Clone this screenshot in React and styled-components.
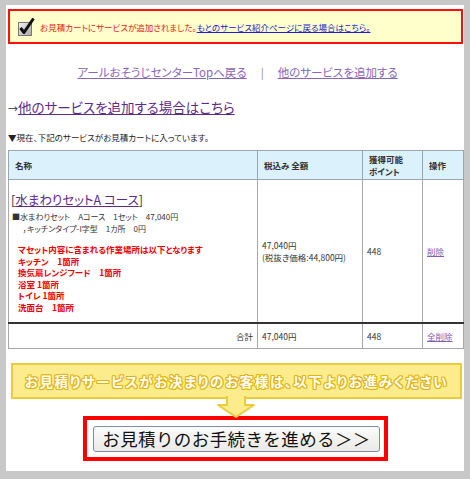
import React from "react";
import styled, { createGlobalStyle } from "styled-components";

const Global = createGlobalStyle`
  html, body { margin: 0; padding: 0; background: #c8c8c8; }
  body { font-family: "Noto Sans CJK JP", "Liberation Sans", sans-serif; }
`;

const Frame = styled.div`
  width: 470px;
  height: 479px;
  box-sizing: border-box;
  padding: 5px 6px 8px 6px;
  background: #c8c8c8;
`;

const Page = styled.div`
  background: #fff;
  height: 100%;
  box-sizing: border-box;
  padding: 4px 1px 0 2px;
  display: flex;
  flex-direction: column;
  font-family: "Noto Sans CJK JP", sans-serif;
  font-feature-settings: "palt";
`;

const Notice = styled.div`
  height: 35px;
  box-sizing: border-box;
  border: 2px solid #ff1010;
  background: #ffffcc;
  display: flex;
  align-items: center;
  padding-left: 7px;
  gap: 5px;
  font-size: 8.5px;
`;

const NoticeText = styled.span`
  color: #f01818;
`;

const NoticeLink = styled.a`
  color: #2020d0;
  text-decoration: underline;
`;

const NavRow = styled.div`
  margin-top: 20px;
  display: flex;
  justify-content: center;
  align-items: center;
  gap: 14px;
  font-size: 11.5px;
  padding-left: 4px;
`;

const NavLink = styled.a`
  color: #8a66b8;
  text-decoration: underline;
`;

const Sep = styled.span`
  color: #888;
  font-size: 11px;
`;

const BigLine = styled.div`
  margin-top: 17px;
  display: flex;
  align-items: baseline;
  font-size: 13.5px;
  color: #5b2b8c;
`;

const Arrow = styled.span`
  font-size: 10px;
  color: #333;
`;

const BigLink = styled.a`
  color: #5b2b8c;
  text-decoration: underline;
  text-decoration-thickness: 1px;
`;

const Caption = styled.div`
  margin-top: 13px;
  font-size: 8.5px;
  color: #222;
  height: 14px;
  line-height: 14px;
`;

const Table = styled.table`
  margin-top: 6px;
  width: 455px;
  border-collapse: collapse;
  table-layout: fixed;
  font-size: 8.5px;
  color: #222;
`;

const Th = styled.th`
  background: #dbf1fb;
  border: 1px solid #9aa6ae;
  height: 28px;
  text-align: left;
  vertical-align: middle;
  font-weight: bold;
  padding: 0 6px;
  line-height: 12px;
  color: #333;
`;

const Td = styled.td`
  border: 1px solid #a8a8a8;
  border-bottom: ${(p) => (p.$thick ? "2px solid #333" : "1px solid #a8a8a8")};
  vertical-align: middle;
  padding: ${(p) => (p.$pad ? p.$pad : "0 4px")};
  text-align: ${(p) => (p.$right ? "right" : "left")};
  height: ${(p) => (p.$h ? p.$h : "auto")};
  line-height: 12px;
  color: #333;
`;

const ItemTitle = styled.div`
  font-size: 12.5px;
  line-height: 16px;
  color: #333;
`;

const ItemLink = styled.a`
  color: #5b2b8c;
  text-decoration: underline;
`;

const SubLine = styled.div`
  font-size: 8px;
  line-height: 12px;
  padding-left: ${(p) => (p.$indent ? "12px" : "1px")};
  margin-top: ${(p) => (p.$first ? "3px" : "0")};
  color: #333;
`;

const RedList = styled.div`
  margin-top: 9px;
  padding-left: 7px;
  color: #f00000;
  font-weight: bold;
  font-size: 8.5px;
  line-height: 11.6px;
`;

const SmallLink = styled.a`
  color: #8060b0;
  text-decoration: underline;
`;

const Banner = styled.div`
  margin: 14px 1px 0 3px;
  height: 36px;
  box-sizing: border-box;
  border: 2px solid #eccb3a;
  background: #fdec8c;
  display: flex;
  align-items: center;
  justify-content: center;
  font-weight: bold;
  font-size: 13.5px;
  letter-spacing: 1.6px;
  color: #fff;
  text-shadow:
    1px 0 0 #e3b410, -1px 0 0 #e3b410, 0 1px 0 #e3b410, 0 -1px 0 #e3b410,
    1px 1px 0 #e3b410, -1px -1px 0 #e3b410, 1px -1px 0 #e3b410, -1px 1px 0 #e3b410;
`;

const ArrowWrap = styled.div`
  display: flex;
  justify-content: center;
  margin-top: -3px;
  height: 22px;
  position: relative;
  z-index: 1;
`;

const RedBox = styled.div`
  align-self: center;
  margin-top: -2px;
  width: 305px;
  height: 45px;
  box-sizing: border-box;
  border: 4px solid #ff0000;
  padding: 6px 4px 5px 6px;
  background: #fff;
`;

const Button = styled.button`
  width: 100%;
  height: 26px;
  box-sizing: border-box;
  border: 1px solid #7d8fa6;
  border-radius: 3px;
  background: linear-gradient(#fbfbfb, #e9e9e6);
  font-family: "Noto Sans CJK JP", sans-serif;
  font-feature-settings: normal;
  font-size: 17.5px;
  letter-spacing: 0.4px;
  color: #111;
  padding: 0;
  line-height: 22px;
  cursor: pointer;
`;

function CheckIcon() {
  return (
    <svg width="18" height="20" viewBox="0 0 18 20">
      <defs>
        <linearGradient id="cb" x1="0" y1="0" x2="1" y2="1">
          <stop offset="0" stopColor="#f4f4f4" />
          <stop offset="1" stopColor="#a8a8a8" />
        </linearGradient>
      </defs>
      <rect x="1.5" y="5.5" width="13" height="13" fill="url(#cb)" stroke="#777" />
      <path d="M3.5 11 L7 15.5 L16.5 1.5" fill="none" stroke="#111" strokeWidth="3" strokeLinejoin="round" />
    </svg>
  );
}

function DownArrow() {
  return (
    <svg width="40" height="22" viewBox="0 0 40 22">
      <path
        d="M11 0 L11 9 L2 9 L20 21 L38 9 L29 9 L29 0 Z"
        fill="#fdec8c"
        stroke="#eccb3a"
        strokeWidth="2"
        strokeLinejoin="round"
      />
      <rect x="12" y="0" width="16" height="3" fill="#fdec8c" />
    </svg>
  );
}

export default function App() {
  return (
    <>
      <Global />
      <Frame>
        <Page>
          <Notice>
            <CheckIcon />
            <span>
              <NoticeText>お見積カートにサービスが追加されました。</NoticeText>
              <NoticeLink href="#">もとのサービス紹介ページに戻る場合はこちら。</NoticeLink>
            </span>
          </Notice>

          <NavRow>
            <NavLink href="#">アールおそうじセンターTopへ戻る</NavLink>
            <Sep>|</Sep>
            <NavLink href="#">他のサービスを追加する</NavLink>
          </NavRow>

          <BigLine>
            <Arrow>→</Arrow>
            <BigLink href="#">他のサービスを追加する場合はこちら</BigLink>
          </BigLine>

          <Caption>▼現在、下記のサービスがお見積カートに入っています。</Caption>

          <Table>
            <colgroup>
              <col style={{ width: "249px" }} />
              <col style={{ width: "105px" }} />
              <col style={{ width: "60px" }} />
              <col style={{ width: "41px" }} />
            </colgroup>
            <thead>
              <tr>
                <Th>名称</Th>
                <Th>税込み 全額</Th>
                <Th>獲得可能<br />ポイント</Th>
                <Th>操作</Th>
              </tr>
            </thead>
            <tbody>
              <tr>
                <Td $thick $pad="12px 2px 8px 2px">
                  <ItemTitle>
                    [<ItemLink href="#">水まわりセットA コース</ItemLink>]
                  </ItemTitle>
                  <SubLine $first>■水まわりセット　Aコース　1セット　47,040円</SubLine>
                  <SubLine $indent>，キッチンタイプ-I字型　1カ所　0円</SubLine>
                  <RedList>
                    <div>マセット内容に含まれる作業場所は以下となります</div>
                    <div>キッチン　1箇所</div>
                    <div>換気扇レンジフード　1箇所</div>
                    <div>浴室 1箇所</div>
                    <div>トイレ 1箇所</div>
                    <div>洗面台　1箇所</div>
                  </RedList>
                </Td>
                <Td $thick>
                  47,040円
                  <br />
                  (税抜き価格:44,800円)
                </Td>
                <Td $thick>448</Td>
                <Td $thick>
                  <SmallLink href="#">削除</SmallLink>
                </Td>
              </tr>
              <tr>
                <Td $right $h="24px">合計</Td>
                <Td>47,040円</Td>
                <Td>448</Td>
                <Td>
                  <SmallLink href="#">全削除</SmallLink>
                </Td>
              </tr>
            </tbody>
          </Table>

          <Banner>お見積りサービスがお決まりのお客様は、以下よりお進みください</Banner>
          <ArrowWrap>
            <DownArrow />
          </ArrowWrap>
          <RedBox>
            <Button>お見積りのお手続きを進める＞＞</Button>
          </RedBox>
        </Page>
      </Frame>
    </>
  );
}
